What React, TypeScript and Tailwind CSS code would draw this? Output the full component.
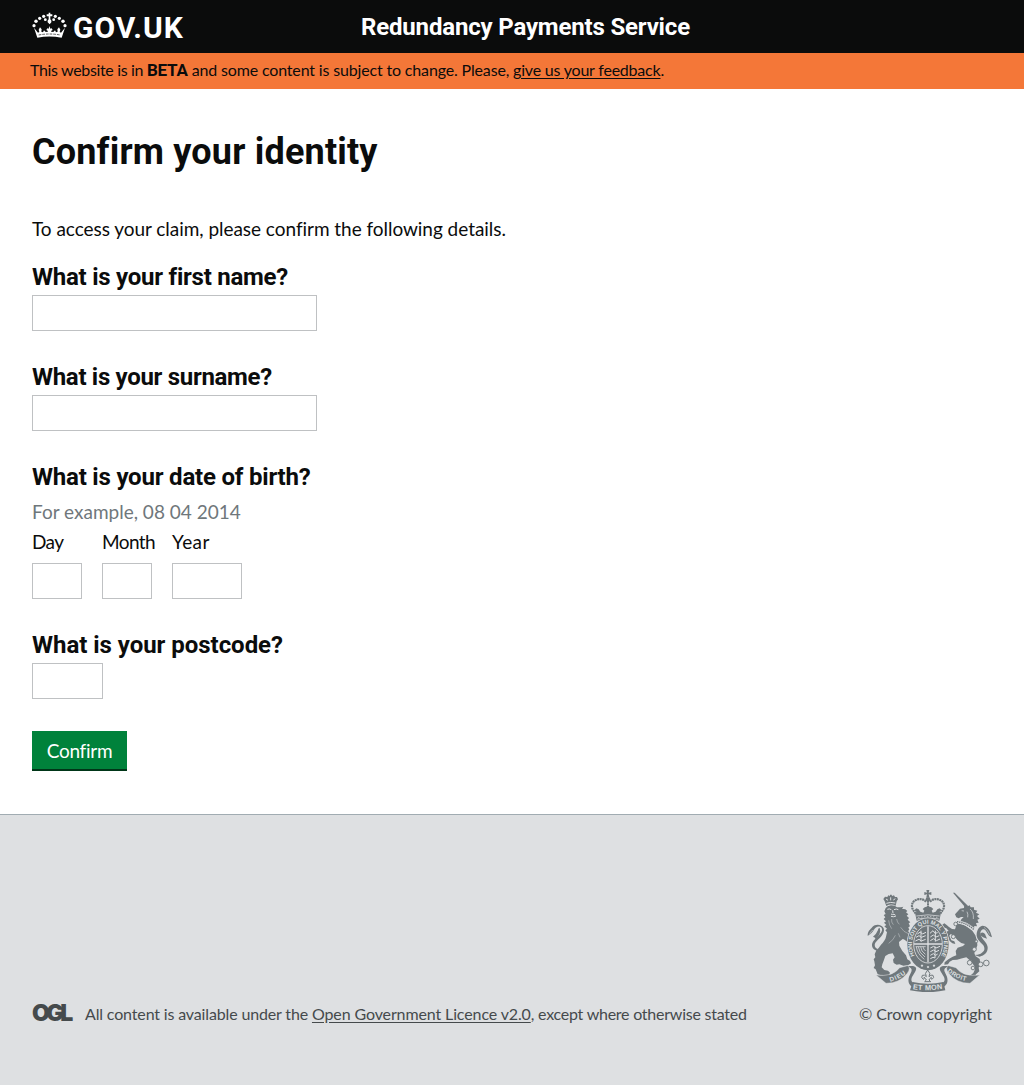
import type { ReactNode } from "react";

function CrownLogo() {
  return (
    <svg className="h-[27px] w-[35px]" viewBox="36 37 105 81" fill="#fff" aria-hidden="true">
      <circle cx="71" cy="50" r="4.8" />
      <circle cx="59" cy="56" r="4.8" />
      <circle cx="48" cy="65" r="5.2" />
      <circle cx="42" cy="78" r="4.8" />
      <circle cx="106" cy="50" r="4.8" />
      <circle cx="118" cy="56" r="4.8" />
      <circle cx="129" cy="65" r="5.2" />
      <circle cx="135" cy="78" r="4.8" />
      <circle cx="76" cy="60" r="4.2" />
      <circle cx="101" cy="60" r="4.2" />
      <path d="M86 39h5v5h6v6h-6v9q5 4 3 9l-5 6-6-6q-2-5 3-9v-9h-6v-6h6z" />
      <path d="M42 84L54 99 58 97 56 90 60 83 65 89 64 96 69 98 72 92 76 96 82 97 84 94 79 91 82 86 86 87 88 79 91 87 95 86 98 91 93 94 95 97 101 96 105 92 108 98 113 96 112 89 117 83 121 90 119 97 123 99 135 84 125 114Q88 107 52 114Z" />
      <path d="M56 106q32-6 65 0" fill="none" stroke="#0b0c0c" strokeWidth="2" strokeDasharray="8 3" />
    </svg>
  );
}

function RoyalArms() {
  return (
    <svg className="h-[103px] w-[125px]" viewBox="36 27 375 309" fill="#6f777b" aria-label="Royal coat of arms">
      <defs>
        <path id="garter" d="M181 231A48 62 0 1 1 257 231" />
        <path id="dieu" d="M106 305Q135 298 160 275" />
        <path id="droit" d="M276 275Q302 297 338 304" />
        <path id="etmon" d="M170 327Q218 335 270 325" />
      </defs>

      {/* imperial crown */}
      <path d="M214 30h9l-2 8 8-2v9l-8-2 2 9h-9l2-9-8 2v-9l8 2z" />
      <circle cx="219" cy="58" r="7" />
      <g fill="none" stroke="#6f777b" strokeWidth="6.5" strokeDasharray="6 1.5">
        <path d="M213 65C197 49 168 60 171 80C172 90 178 93 182 101" />
        <path d="M225 65C241 49 270 60 267 80C266 90 260 93 256 101" />
        <path d="M219 62v30" strokeWidth="6" />
      </g>
      <path d="M181 103l3-8-6-4 6-6 7 3 5 7 9 3 3-6-5-5 6-5 10-3 10 3 6 5-5 5 3 6 9-3 5-7 7-3 6 6-6 4 3 8-4 19q-34-7-68 0z" />
      <path d="M184 108q35-7 70 0M186 117q33-7 66 0" fill="none" stroke="#dee0e2" strokeWidth="2.2" />
      <path d="M190 112.5q29-6 58 0" fill="none" stroke="#dee0e2" strokeWidth="3" strokeDasharray="3 6" />

      {/* lion */}
      <path d="M94 78L89 64 85 57 90 50 97 51 100 46 105 48 105 44 110 44 111 48 117 46 120 51 126 51 129 58 125 64 122 77Q108 70 94 78Z" />
      <path d="M94 70q13-5 27-1M93 57l6 4M121 56l-6 4M107 52v9" fill="none" stroke="#dee0e2" strokeWidth="3" />
      <path d="M92 84L98 79 108 76 119 77 126 82 138 82 145 80 141 86 151 88 157 93 153 97 160 103 155 107 162 114 158 119 166 127 161 130 165 139 160 142 163 150 158 153Q166 158 173 163L178 166 172 172 165 169 167 178 173 188 176 194 170 202 165 199 160 188Q148 178 143 177L132 186 133 197 142 213 153 226 157 238 165 243 168 250 159 256 145 257 133 253 125 254 116 249 114 239 119 232 113 220Q100 220 91 228L86 242 82 253 80 262 88 270 99 272 105 278 102 285 90 287 78 286 68 283 62 268 56 264 60 256 58 244 56 238 61 232 59 223 64 211 71 204 78 194Q91 181 93 170L96 157 91 151 96 146 88 139 94 135 87 128 93 124 86 117 91 112 86 105 92 102 88 94Z" />
      <path d="M97 88q6-3 12 1M117 89q7-4 13 0M108 102q4 3 9 1l4 2M108 109q7 3 15-1M113 91l1 9" fill="none" stroke="#dee0e2" strokeWidth="3" />
      <path d="M110 117q-2 10 5 17M101 121q1 15 9 25M125 117q1 10 8 16M137 142l10 12 15 8M121 166q-5 14-20 24M130 160l5 12" fill="none" stroke="#dee0e2" strokeWidth="1.3" />
      <path d="M66 212C49 208 47 192 57 181C68 169 86 155 80 144C74 135 61 140 57 149C52 157 44 165 38 167C38 153 46 149 52 141C61 131 80 132 86 145C92 162 70 177 61 188C57 195 60 204 68 207Z" />
      <path d="M55 150Q47 152 43 164" stroke="#dee0e2" strokeWidth="1.5" fill="none" />
      <path d="M54 170Q64 163 69 150 68 146 74 143 80 160 62 178L60 173Z" />

      {/* unicorn */}
      <path d="M294 38L299 38 340 79 333 85Z" />
      <path d="M327 84L328 75 335 80 344 76 347 82 357 82 357 89 367 92 363 98 373 103 366 108 374 116 367 119 371 128 363 129 366 139 358 138 357 147 343 138 314 130 319 118 326 111 318 111 311 115 304 112 300 103 307 95 315 86Z" />
      <path d="M320 92l7 1M345 87q12 9 10 30M336 95q4 8 2 17" fill="none" stroke="#dee0e2" strokeWidth="2" />
      <path d="M306 130L330 136 352 152 361 166 366 182 367 196 363 208 358 219 361 228 374 237 376 252 371 263 373 274 363 283 358 294 343 294 345 287 355 279 360 268 358 258 346 242 334 232Q318 236 306 239L293 240 284 245 279 253 268 254 269 247 280 238 293 230 304 226 302 213 308 203 324 198 330 192Q317 191 308 181L300 172Q292 163 288 163L279 162 269 165 264 159 262 149 266 147 271 155 281 153 274 145 264 142 262 134 268 130 275 135 282 141 291 147 300 148Z" />
      <path d="M300 155q-12 2-17 12l6 14 9 3 3 8-9-2-8-7-7-17 7-13" />
      <path d="M306 125q28 3 51 24" fill="none" stroke="#dee0e2" strokeWidth="9" />
      <path d="M306 125q28 3 51 24" fill="none" stroke="#6f777b" strokeWidth="4.5" strokeDasharray="4 2.5" />
      <path d="M374 230C388 226 399 219 398 201C395 184 378 178 376 160C376 149 387 143 393 153C399 163 403 170 411 172C406 149 396 137 382 137C371 140 364 152 365 167C367 180 378 187 385 196C391 207 389 214 377 221Q368 225 358 225Z" />
      <path d="M387 142Q399 150 404 164" fill="none" stroke="#dee0e2" strokeWidth="1.5" />
      <path d="M376 160q8-6 14 2l6 14q-14-3-20-10z" />
      <g fill="#dee0e2" stroke="#6f777b" strokeWidth="2.8">
        <circle cx="302" cy="132" r="5.5" />
        <circle cx="295" cy="170" r="6" />
        <circle cx="358" cy="208" r="6" />
        <circle cx="344" cy="248" r="7" />
        <circle cx="377" cy="253" r="7" />
        <circle cx="394" cy="249" r="8.5" />
        <circle cx="354" cy="264" r="5.5" />
        <circle cx="364" cy="184" r="4" />
      </g>

      {/* garter and shield */}
      <ellipse cx="219" cy="193" rx="64" ry="80" fill="#dee0e2" />
      <ellipse cx="219" cy="193" rx="62" ry="78" />
      <ellipse cx="219" cy="193" rx="43" ry="56" fill="none" stroke="#dee0e2" strokeWidth="2.5" />
      <g fill="none" stroke="#dee0e2">
        <path d="M219 139v108M177 192h84" strokeWidth="4" />
        <path d="M187 162l9-6 6 6 11-5M183 172l9-5 7 5 13-5M181 183l11-5 7 5 13-5M198 152v33" strokeWidth="3" />
        <path d="M225 160l9-8 6 8 8-2M226 171l9-6 8 6 10-4M226 182l10-6 8 6 11-5M241 152v33" strokeWidth="3" />
        <path d="M184 200q2 21 24 38M190 200q1 18 20 31M197 200q1 14 14 23M204 200q1 8 8 13M182 200h30" strokeWidth="2.3" />
        <path d="M226 204l10-5 7 5 12-5M226 215l10-5 7 5 9-4M226 226l9-5 7 5 6-4M226 236l8-4 6 2M240 199v35" strokeWidth="3" />
      </g>
      <text fontSize="17" fill="#dee0e2" fontFamily='"Liberation Sans", sans-serif' fontWeight="700">
        <textPath href="#garter" startOffset="4" textLength="245">HONI SOIT QUI MAL Y PENSE</textPath>
      </text>
      <path d="M201 253l4 4-4 4-4-4zM219 257l4 4-4 4-4-4zM237 253l4 4-4 4-4-4z" fill="#dee0e2" />

      {/* motto ribbon */}
      <path d="M63 285Q113 292 134 263L157 257Q169 262 157 280Q134 310 93 310Z" stroke="#dee0e2" strokeWidth="1.5" />
      <path d="M158 259C183 255 188 263 180 276L171 291C167 301 170 307 178 309L171 320C158 312 159 298 163 288L169 275C172 267 168 264 158 259Z" />
      <path d="M374 285Q325 292 303 263L281 257Q269 262 281 280Q304 310 345 310Z" stroke="#dee0e2" strokeWidth="1.5" />
      <path d="M280 259C255 255 250 263 258 276L267 291C271 301 268 307 260 309L267 320C280 312 279 298 275 288L269 275C266 267 270 264 280 259Z" />
      <path d="M173 306Q219 317 265 306L271 331Q219 342 165 331Z" />
      <path d="M218 270q-11 10-4 20-5-7-12-4-5 7 3 12 4-1 2-6 6 4 7 8l-5 5h18l-5-5q1-4 7-8-2 5 2 6 8-5 3-12-7-3-12 4 7-10-4-20z" fill="#dee0e2" stroke="#6f777b" strokeWidth="3" />
      <g fill="#dee0e2" fontFamily='"Liberation Sans", sans-serif' fontWeight="700">
        <text fontSize="19"><textPath href="#dieu" textLength="53">DIEU</textPath></text>
        <text fontSize="19"><textPath href="#droit" textLength="63">DROIT</textPath></text>
        <text fontSize="22"><textPath href="#etmon" startOffset="3" textLength="90">ET MON</textPath></text>
      </g>
    </svg>
  );
}

function Heading({ id, className, children }: { id: string; className: string; children: ReactNode }) {
  return (
    <label htmlFor={id} className={`block font-[Roboto,sans-serif] text-2xl leading-[30px] font-bold whitespace-nowrap ${className}`}>
      {children}
    </label>
  );
}

function Field({ id, className }: { id: string; className: string }) {
  return <input id={id} type="text" className={`block h-9 border border-[#bfc1c3] bg-white px-1 outline-none ${className}`} />;
}

export default function App() {
  return (
    <div className="flex min-h-[1085px] flex-col bg-white font-[Lato,sans-serif] text-[19px] text-[#0b0c0c]">
      <header className="flex h-[53px] items-start bg-[#0b0c0c] pl-8 text-white">
        <a href="#" className="flex w-[329px] items-start">
          <span className="pt-3"><CrownLogo /></span>
          <span className="pt-[9px] pl-[6px] font-[Roboto,sans-serif] text-[30px] leading-[38px] font-bold tracking-[1px]">GOV.UK</span>
        </a>
        <span className="pt-3 font-[Roboto,sans-serif] text-2xl leading-[30px] font-bold tracking-[-0.17px]">Redundancy Payments Service</span>
      </header>

      <div className="h-9 bg-[#f47738] pl-[30px] text-base leading-[34px] whitespace-pre">
        <span className="tracking-[-0.34px]">This website is in </span>
        <strong className="font-[Roboto,sans-serif] text-[17px] font-bold tracking-[-0.2px]">BETA</strong>
        <span className="tracking-[-0.16px]"> and some content is subject to change. Please, </span>
        <a href="#" className="tracking-[-0.21px] underline underline-offset-2">give us your feedback</a>.
      </div>

      <main className="flex h-[725px] flex-col items-start px-8 pt-[43px]">
        <h1 className="font-[Roboto,sans-serif] text-4xl leading-10 font-bold tracking-[0.19px]">Confirm your identity</h1>
        <p className="mt-11 leading-[25px] tracking-[-0.04px]">To access your claim, please confirm the following details.</p>

        <div className="mt-[21px]">
          <Heading id="first" className="tracking-[-0.24px]">What is your first name?</Heading>
          <Field id="first" className="mt-[3px] w-[285px]" />
        </div>
        <div className="mt-[31px]">
          <Heading id="surname" className="tracking-[-0.3px]">What is your surname?</Heading>
          <Field id="surname" className="mt-[3px] w-[285px]" />
        </div>
        <div className="mt-[31px]">
          <Heading id="day" className="tracking-[-0.2px]">What is your date of birth?</Heading>
          <p className="mt-[7px] leading-[25px] text-[#6f777b]">For example, 08 04 2014</p>
          <div className="mt-[5px] flex gap-5 leading-[25px]">
            <label className="w-[50px] tracking-[-0.6px]">Day<Field id="day" className="mt-[9px] w-[50px]" /></label>
            <label className="w-[50px] tracking-[-0.6px]">Month<Field id="month" className="mt-[9px] w-[50px]" /></label>
            <label className="w-[70px] tracking-[0.4px]">Year<Field id="year" className="mt-[9px] w-[70px]" /></label>
          </div>
        </div>
        <div className="mt-[31px]">
          <Heading id="postcode" className="tracking-[-0.03px]">What is your postcode?</Heading>
          <Field id="postcode" className="mt-[3px] w-[71px]" />
        </div>
        <button type="button" className="mt-8 h-10 w-[95px] border-b-2 border-[#003618] bg-[#00823b] pt-0.5 tracking-[-0.25px] text-white">Confirm</button>
      </main>

      <footer className="flex flex-1 items-start justify-between border-t border-[#a1acb2] bg-[#dee0e2] px-8 pt-[74px] text-base leading-5 text-[#454a4c]">
        <div className="flex items-center pt-[115px] whitespace-pre">
          <span className="h-5 w-[53px] font-[Inter,sans-serif] text-[23px] leading-[18px] font-black tracking-[-3.5px]">OGL</span>
          <span className="tracking-[-0.15px]">All content is available under the </span>
          <a href="#" className="tracking-[-0.12px] underline underline-offset-2">Open Government Licence v2.0</a>
          <span className="tracking-[-0.24px]">, except where otherwise stated</span>
        </div>
        <div className="flex flex-col items-end">
          <RoyalArms />
          <a href="#" className="mt-3 tracking-[-0.07px]">© Crown copyright</a>
        </div>
      </footer>
    </div>
  );
}
